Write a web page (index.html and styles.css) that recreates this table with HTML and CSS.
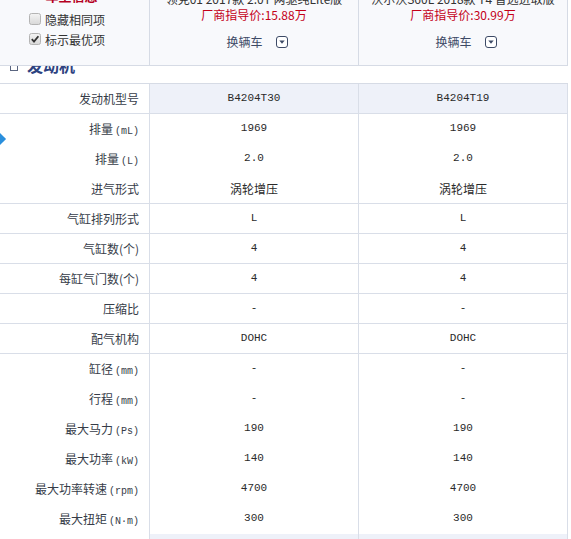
FILE: index.html
```html
<!DOCTYPE html>
<html lang="zh-CN">
<head>
<meta charset="utf-8">
<title>参数对比</title>
<link rel="stylesheet" href="styles.css">
</head>
<body>
<div class="page">
  <div class="head">
    <div class="head-cell head-left">
      <div class="head-title">车型信息</div>
      <label class="check">
        <svg class="box" width="12" height="12" viewBox="0 0 12 12"><defs><linearGradient id="bg1" x1="0" y1="0" x2="0" y2="1"><stop offset="0" stop-color="#f4f4f4"/><stop offset="1" stop-color="#d8d8d8"/></linearGradient></defs><rect x="0.5" y="0.5" width="11" height="11" rx="2" fill="url(#bg1)" stroke="#b4b4b4"/></svg>
        <span>隐藏相同项</span>
      </label>
      <label class="check">
        <svg class="box" width="12" height="12" viewBox="0 0 12 12"><defs><linearGradient id="bg2" x1="0" y1="0" x2="0" y2="1"><stop offset="0" stop-color="#f4f4f4"/><stop offset="1" stop-color="#d8d8d8"/></linearGradient></defs><rect x="0.5" y="0.5" width="11" height="11" rx="2" fill="url(#bg2)" stroke="#b4b4b4"/><path d="M2.8 6.2 L5 8.6 L9.4 3.2" fill="none" stroke="#333" stroke-width="1.8"/></svg>
        <span>标示最优项</span>
      </label>
    </div>
    <div class="head-cell head-car">
      <div class="car-name">领克01 2017款 2.0T 两驱纯Lite版</div>
      <div class="car-price">厂商指导价:15.88万</div>
      <div class="car-change">换辆车
        <svg class="drop" width="12" height="12" viewBox="0 0 12 12"><rect x="0.5" y="0.5" width="11" height="11" rx="2.5" fill="#fff" stroke="#3d4a66"/><path d="M3.3 4.6 L8.7 4.6 L6 7.8 Z" fill="#3d4a66"/></svg>
      </div>
    </div>
    <div class="head-cell head-car">
      <div class="car-name">沃尔沃S60L 2018款 T4 智远进取版</div>
      <div class="car-price">厂商指导价:30.99万</div>
      <div class="car-change">换辆车
        <svg class="drop" width="12" height="12" viewBox="0 0 12 12"><rect x="0.5" y="0.5" width="11" height="11" rx="2.5" fill="#fff" stroke="#3d4a66"/><path d="M3.3 4.6 L8.7 4.6 L6 7.8 Z" fill="#3d4a66"/></svg>
      </div>
    </div>
  </div>

  <div class="side-tab"></div>

  <div class="sheet">
    <div class="section"><span class="sq"></span>发动机</div>

    <div class="row diff"><div class="lab">发动机型号</div><div class="val mono">B4204T30</div><div class="val mono">B4204T19</div></div>
    <div class="row"><div class="lab">排量<span class="u">(mL)</span></div><div class="val mono">1969</div><div class="val mono">1969</div></div>
    <div class="row"><div class="lab">排量<span class="u">(L)</span></div><div class="val mono">2.0</div><div class="val mono">2.0</div></div>
    <div class="row"><div class="lab">进气形式</div><div class="val">涡轮增压</div><div class="val">涡轮增压</div></div>
    <div class="row"><div class="lab">气缸排列形式</div><div class="val mono">L</div><div class="val mono">L</div></div>
    <div class="row"><div class="lab">气缸数(个)</div><div class="val mono">4</div><div class="val mono">4</div></div>
    <div class="row"><div class="lab">每缸气门数(个)</div><div class="val mono">4</div><div class="val mono">4</div></div>
    <div class="row"><div class="lab">压缩比</div><div class="val mono">-</div><div class="val mono">-</div></div>
    <div class="row"><div class="lab">配气机构</div><div class="val mono">DOHC</div><div class="val mono">DOHC</div></div>
    <div class="row"><div class="lab">缸径<span class="u">(mm)</span></div><div class="val mono">-</div><div class="val mono">-</div></div>
    <div class="row"><div class="lab">行程<span class="u">(mm)</span></div><div class="val mono">-</div><div class="val mono">-</div></div>
    <div class="row"><div class="lab">最大马力<span class="u">(Ps)</span></div><div class="val mono">190</div><div class="val mono">190</div></div>
    <div class="row"><div class="lab">最大功率<span class="u">(kW)</span></div><div class="val mono">140</div><div class="val mono">140</div></div>
    <div class="row"><div class="lab">最大功率转速<span class="u">(rpm)</span></div><div class="val mono">4700</div><div class="val mono">4700</div></div>
    <div class="row"><div class="lab">最大扭矩<span class="u">(N·m)</span></div><div class="val mono">300</div><div class="val mono">300</div></div>
    <div class="row diff"><div class="lab">最大扭矩转速<span class="u">(rpm)</span></div><div class="val mono">1400-4000</div><div class="val mono">1500-4000</div></div>
  </div>
</div>
</body>
</html>
```
FILE: styles.css
```css
html, body {
  margin: 0;
  padding: 0;
  background: #fff;
}
body {
  width: 571px;
  height: 539px;
  overflow: hidden;
  font-family: "Noto Sans CJK SC", "Liberation Sans", sans-serif;
  font-size: 12px;
  color: #333;
}
.page {
  position: relative;
  width: 571px;
}

/* fixed header overlaying the scrolled table */
.head {
  position: absolute;
  top: 0;
  left: 0;
  z-index: 2;
  width: 568px;
  height: 66px;
  box-sizing: border-box;
  border-bottom: 1px solid #d6dbe5;
  background: #f8f9fc;
  display: grid;
  grid-template-columns: 150px 209px 209px;
  overflow: hidden;
}
.head-cell {
  border-right: 1px solid #d6dbe5;
  display: flex;
  flex-direction: column;
}
.head-left {
  align-items: flex-start;
}
.head-title {
  align-self: center;
  margin-top: -11px;
  margin-left: -6px;
  line-height: 14px;
  font-size: 13px;
  font-weight: bold;
  color: #b5001f;
}
.check {
  display: flex;
  align-items: center;
  height: 20px;
  padding-left: 29px;
  margin-top: 6px;
  color: #333;
}
.check + .check {
  margin-top: 0;
}
.box {
  display: block;
  margin-right: 4px;
}
.head-car {
  align-items: center;
}
.car-name {
  margin-top: -9px;
  line-height: 16px;
  color: #333;
  white-space: nowrap;
}
.car-price {
  line-height: 16px;
  color: #c40018;
}
.car-change {
  margin-top: 11px;
  line-height: 16px;
  display: flex;
  align-items: center;
  gap: 13px;
  padding-left: 6px;
  color: #3d4a66;
}
.drop {
  display: block;
}

/* blue tab at left edge */
.side-tab {
  position: absolute;
  left: -6px;
  top: 134px;
  width: 10px;
  height: 10px;
  background: #2a8fdd;
  transform: rotate(45deg);
  z-index: 3;
}

.sheet {
  padding-top: 50px;
  width: 568px;
}
.section {
  height: 34px;
  box-sizing: border-box;
  border-bottom: 1px solid #d6dbe5;
  padding-top: 7px;
  padding-left: 10px;
  line-height: 16px;
  font-size: 16px;
  font-weight: bold;
  color: #2d4280;
  display: flex;
  align-items: flex-start;
}
.sq {
  display: inline-block;
  width: 6px;
  height: 6px;
  border: 1px solid #5a6580;
  margin-top: 6px;
  margin-right: 9px;
}
.row {
  display: grid;
  grid-template-columns: 150px 209px 209px;
  height: 30px;
}
.row > div {
  box-sizing: border-box;
  border-right: 1px solid #d9dee8;
  border-bottom: 1px solid #d9dee8;
  line-height: 29px;
  white-space: nowrap;
}
.lab {
  text-align: right;
  padding-right: 10px;
  color: #363c48;
  background: #fff;
}
.val {
  text-align: center;
  color: #2a2a2a;
  background: #fff;
}
.row.diff .val {
  background: #eef1f9;
}
.mono {
  font-family: "Liberation Mono", monospace;
  font-size: 11px;
}
.u {
  font-family: "Liberation Mono", monospace;
  font-size: 10px;
  margin-left: 2px;
}
```
